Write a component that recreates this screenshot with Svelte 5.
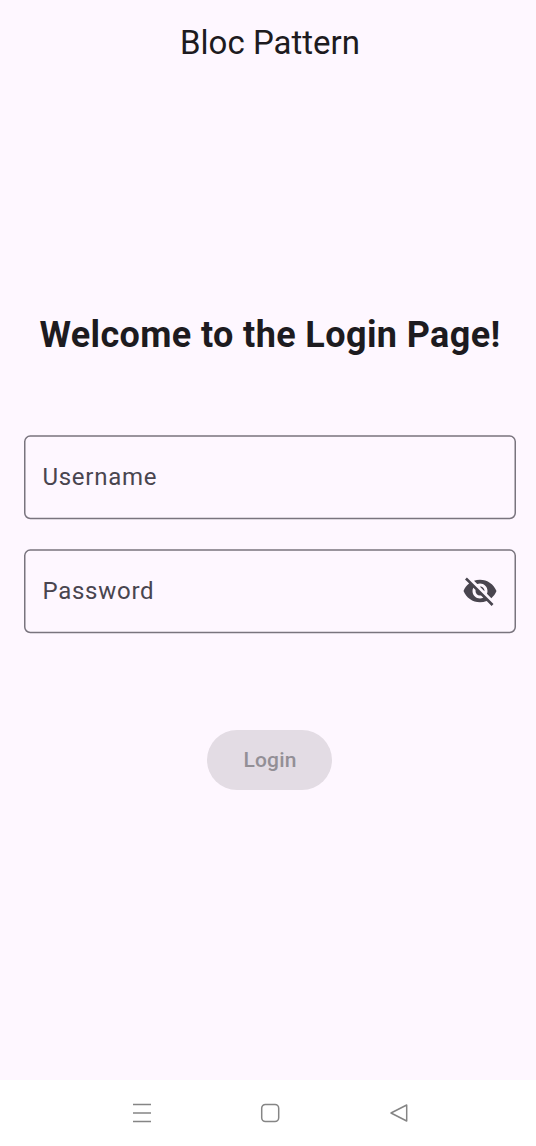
<script>
  let username = $state('Username');
  let password = $state('Password');
</script>

{#snippet outline()}
  <svg class="outline" viewBox="0 0 492 85" width="492" height="85" aria-hidden="true">
    <rect x="0.75" y="1.1" width="490.5" height="82.4" rx="5.5" />
  </svg>
{/snippet}

<div class="screen">
  <header><h1>Bloc Pattern</h1></header>
  <main>
    <h2>Welcome to the Login Page!</h2>
    <div class="field first">{@render outline()}<span>{username}</span></div>
    <div class="field">
      {@render outline()}
      <span>{password}</span>
      <svg class="eye" viewBox="0 0 24 24" width="36" height="36" aria-label="Show password">
        <path d="M12 7c2.76 0 5 2.24 5 5 0 .65-.13 1.26-.36 1.83l2.92 2.92c1.51-1.26 2.7-2.89 3.43-4.75-1.73-4.39-6-7.5-11-7.5-1.4 0-2.74.25-3.98.7l2.16 2.16C10.74 7.13 11.35 7 12 7zM2 4.27l2.28 2.28.46.46C3.08 8.3 1.78 10.02 1 12c1.73 4.39 6 7.5 11 7.5 1.55 0 3.03-.3 4.38-.84l.42.42L19.73 22 21 20.73 3.27 3 2 4.27zM7.53 9.8l1.55 1.55c-.05.21-.08.43-.08.65 0 1.66 1.34 3 3 3 .22 0 .44-.03.65-.08l1.55 1.55c-.67.33-1.41.53-2.2.53-2.76 0-5-2.24-5-5 0-.79.2-1.53.53-2.2zm4.31-.78l3.15 3.15.02-.16c0-1.66-1.34-3-3-3l-.17.01z" />
      </svg>
    </div>
    <button disabled>Login</button>
  </main>
  <nav>
    <svg width="20" height="20" viewBox="0 0 20 20"><path d="M1 1.5h18M1 10h18M1 18.5h18" /></svg>
    <svg width="20" height="20" viewBox="0 0 20 20"><rect x="1.7" y="1.5" width="17" height="17" rx="3.7" /></svg>
    <svg width="20" height="20" viewBox="0 0 20 20"><path d="M17.7 2v16L2 10z" /></svg>
  </nav>
</div>

<style>
  :global(body) { margin: 0; }
  .screen { width: 536px; height: 1146px; display: flex; flex-direction: column; background: #fef7ff; font-family: Roboto, sans-serif; color: #1d1b20; }
  header { height: 86px; display: flex; align-items: center; justify-content: center; padding-left: 4px; }
  h1 { margin: 0; font-size: 33px; font-weight: 400; line-height: 42px; white-space: nowrap; }
  main { flex: 1; display: flex; flex-direction: column; align-items: center; padding: 225px 20px 0 24px; }
  h2 { margin: 0 0 76px; font-size: 36px; line-height: 48px; font-weight: 700; letter-spacing: .38px; white-space: nowrap; }
  .field { position: relative; box-sizing: border-box; width: 492px; height: 84px; padding: 0 18px; display: flex; align-items: center; justify-content: space-between; font-size: 24px; letter-spacing: .75px; color: #49454f; }
  .field span { padding-left: .4px; }
  .outline { position: absolute; left: 0; top: 0; fill: none; stroke: #79747e; stroke-width: 1.5; }
  .first { margin-bottom: 30px; }
  .eye { fill: #49454f; }
  button { margin: 96.5px 1px 0 0; width: 125px; height: 60px; border: 0; border-radius: 30px; padding: 1px 0 0 1px; background: #e3dce4; color: #938f96; font: 500 21px Roboto, sans-serif; letter-spacing: .15px; }
  nav { height: 66px; display: flex; justify-content: space-between; align-items: center; box-sizing: border-box; padding: 0 127px 0 131.5px; background: #fff; }
  nav svg { fill: none; stroke: #858585; stroke-width: 1.5; stroke-linejoin: round; }
</style>
